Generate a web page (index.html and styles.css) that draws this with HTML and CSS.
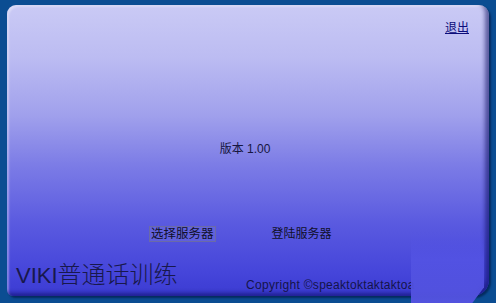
FILE: index.html
```html
<!DOCTYPE html>
<html>
<head>
<meta charset="utf-8">
<link rel="stylesheet" href="styles.css">
</head>
<body>
<div class="panel">
  <div class="top"><a class="exit" href="#">退出</a></div>
  <div class="version">版本 1.00</div>
  <div class="actions">
    <span class="btn btn-sel">选择服务器</span>
    <span class="btn btn-login">登陆服务器</span>
  </div>
  <div class="footer">
    <div class="title"><span class="latin">VIKI</span><span class="cjk">普通话训练</span></div>
    <div class="copy">Copyright ©speaktoktaktaktoa</div>
  </div>
  <div class="patch"></div>
</div>
</body>
</html>
```
FILE: styles.css
```css
html, body { margin: 0; padding: 0; }
body {
  width: 496px; height: 303px; overflow: hidden;
  background: #0b4d92;
  font-family: "Liberation Sans", Arial, "Noto Sans CJK SC", sans-serif;
  color: #141440;
}
.panel {
  position: relative;
  margin: 5px 0 0 7px;
  width: 482px; height: 291px;
  box-sizing: border-box;
  border-radius: 9px 10px 16px 6px;
  background: linear-gradient(to bottom, #cacaf5 0%, #bcbcf2 18%, #a0a0ec 38%, #7c7ce6 55%, #5a5ae0 75%, #4545da 92%, #3b3bd2 100%);
  box-shadow: inset -4px -3px 4px rgba(10,10,90,0.55), inset 2px 2px 2px rgba(255,255,255,0.35), 2px 2px 2px rgba(0,20,60,0.6);
  display: flex; flex-direction: column;
}
.top { display: flex; justify-content: flex-end; padding: 15px 20px 0 0; height: 20px; }
.exit { color: #0c0c7a; font-size: 12px; line-height: 16px; text-decoration: underline; }
.version { margin-top: 102px; text-align: center; font-size: 12px; line-height: 14px; padding-right: 6px; color: #161640; }
.actions { display: flex; margin-top: 70px; padding-left: 142px; gap: 54px; align-items: center; }
.btn { font-size: 12.5px; line-height: 14px; color: #10102a; padding: 0 1px; border: 1px solid transparent; }
.btn-login { font-size: 12px; }
.btn-sel { border-color: #6a6aa8; background: rgba(120,120,220,0.35); }
.footer { display: flex; margin-top: 19px; padding-left: 9px; align-items: flex-end; }
.title { line-height: 28px; color: #18184c; width: 230px; white-space: nowrap; }
.latin { font-size: 22px; }
.cjk { font-size: 24px; font-weight: 300; }
.copy { font-size: 12px; letter-spacing: 0.3px; line-height: 13px; color: #14144a; margin-bottom: 0; width: 170px; overflow: hidden; white-space: nowrap; }
.patch {
  position: absolute; left: 404px; top: 226px; width: 73px; height: 72px;
  background: linear-gradient(to bottom, rgba(84,84,226,0) 0%, rgba(84,84,228,0.8) 40%, #5252de 100%);
  clip-path: polygon(0 0, 100% 0, 100% 78%, 84% 100%, 0 100%);
}
```
